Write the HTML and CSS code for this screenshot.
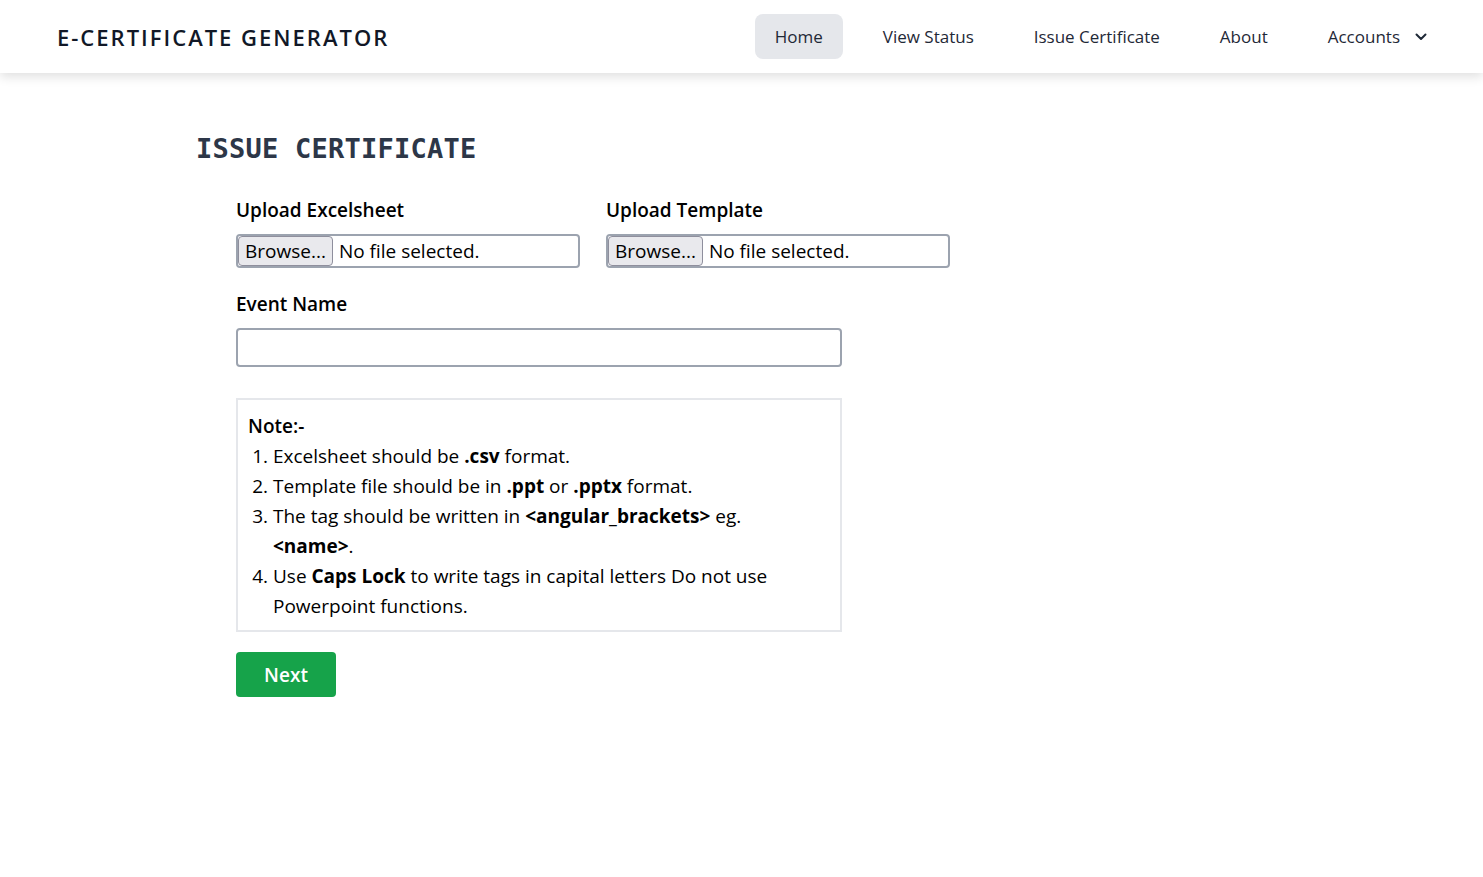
FILE: index.html
```html
<!DOCTYPE html>
<html lang="en">
<head>
<meta charset="utf-8">
<title>E-Certificate Generator</title>
<link rel="stylesheet" href="styles.css">
</head>
<body>
<header class="topbar">
  <div class="brand">E-CERTIFICATE GENERATOR</div>
  <nav class="nav">
    <a class="nav-link active" href="#">Home</a>
    <a class="nav-link" href="#">View Status</a>
    <a class="nav-link" href="#">Issue Certificate</a>
    <a class="nav-link" href="#">About</a>
    <a class="nav-link" href="#">Accounts
      <svg class="chev" viewBox="0 0 12 8" width="12" height="8"><path d="M1.5 1.5 L6 6 L10.5 1.5" fill="none" stroke="#1f2937" stroke-width="2" stroke-linecap="round" stroke-linejoin="round"/></svg>
    </a>
  </nav>
</header>

<main class="main">
  <h1 class="page-title">ISSUE CERTIFICATE</h1>
  <form class="form">
    <div class="uploads">
      <div class="field">
        <label class="label">Upload Excelsheet</label>
        <div class="file-input"><span class="browse">Browse...</span><span class="file-text">No file selected.</span></div>
      </div>
      <div class="field">
        <label class="label">Upload Template</label>
        <div class="file-input"><span class="browse">Browse...</span><span class="file-text">No file selected.</span></div>
      </div>
    </div>
    <div class="field">
      <label class="label">Event Name</label>
      <input class="text-input" type="text">
    </div>
    <div class="note">
      <div class="note-title">Note:-</div>
      <ol class="note-list">
        <li>Excelsheet should be <b>.csv</b> format.</li>
        <li>Template file should be in <b>.ppt</b> or <b>.pptx</b> format.</li>
        <li>The tag should be written in <b>&lt;angular_brackets&gt;</b> eg. <b>&lt;name&gt;</b>.</li>
        <li>Use <b>Caps Lock</b> to write tags in capital letters Do not use Powerpoint functions.</li>
      </ol>
    </div>
    <button class="next" type="button">Next</button>
  </form>
</main>
</body>
</html>
```

FILE: styles.css
```css
* { box-sizing: border-box; }
body {
  margin: 0;
  font-family: "Open Sans", "Noto Sans", sans-serif;
  color: #000;
  background: #fff;
}
.topbar {
  height: 73px;
  display: flex;
  align-items: center;
  justify-content: space-between;
  padding: 0 36px 0 57px;
  background: #fff;
  box-shadow: 0 4px 10px rgba(0,0,0,0.12);
  position: relative;
}
.brand {
  font-size: 22px;
  font-weight: 600;
  letter-spacing: 2px;
  color: #111827;
}
.nav {
  display: flex;
  align-items: center;
  gap: 20px;
}
.nav-link {
  display: flex;
  align-items: center;
  height: 45px;
  padding: 0 20px;
  border-radius: 8px;
  font-size: 17px;
  font-weight: 500;
  color: #1f2937;
  text-decoration: none;
}
.nav-link.active { background: #e5e7eb; }
.chev { margin-left: 15px; margin-top: 1px; }

.main { padding: 0 0 0 196px; }
.page-title {
  margin: 0;
  padding-top: 56px;
  font-family: "DejaVu Sans Mono", monospace;
  font-size: 27px;
  font-weight: bold;
  letter-spacing: 0.25px;
  color: #2d3748;
  line-height: 40px;
}
.form {
  margin-left: 40px;
  padding-top: 26px;
  width: 606px;
  display: flex;
  flex-direction: column;
}
.uploads {
  display: flex;
  gap: 26px;
  width: 714px;
}
.uploads .field { width: 344px; }
.field { display: flex; flex-direction: column; }
.label {
  font-size: 19px;
  font-weight: 600;
  line-height: 30px;
  margin-bottom: 9px;
}
.file-input {
  height: 34px;
  border: 2px solid #9ca3af;
  border-radius: 4px;
  display: flex;
  align-items: center;
  font-size: 19px;
  overflow: hidden;
  margin-bottom: 21px;
}
.browse {
  height: 100%;
  display: flex;
  align-items: center;
  padding: 0 6px;
  background: #e9e9ed;
  border: 1px solid #8f8f9d;
  border-radius: 4px;
  margin-right: 6px;
}
.text-input {
  height: 39px;
  border: 2px solid #9ca3af;
  border-radius: 4px;
  width: 606px;
  margin-bottom: 31px;
}
.note {
  border: 2px solid #e5e7eb;
  padding: 11px 20px 9px 10px;
  font-size: 19px;
  line-height: 30px;
}
.note-title { font-weight: 600; }
.note-list {
  margin: 0;
  padding-left: 25px;
}
.note-list b { font-weight: 700; }
.next {
  margin-top: 20px;
  width: 100px;
  height: 45px;
  background: #16a34a;
  color: #fff;
  border: none;
  border-radius: 4px;
  font-family: inherit;
  font-size: 19px;
  font-weight: 600;
}
```
